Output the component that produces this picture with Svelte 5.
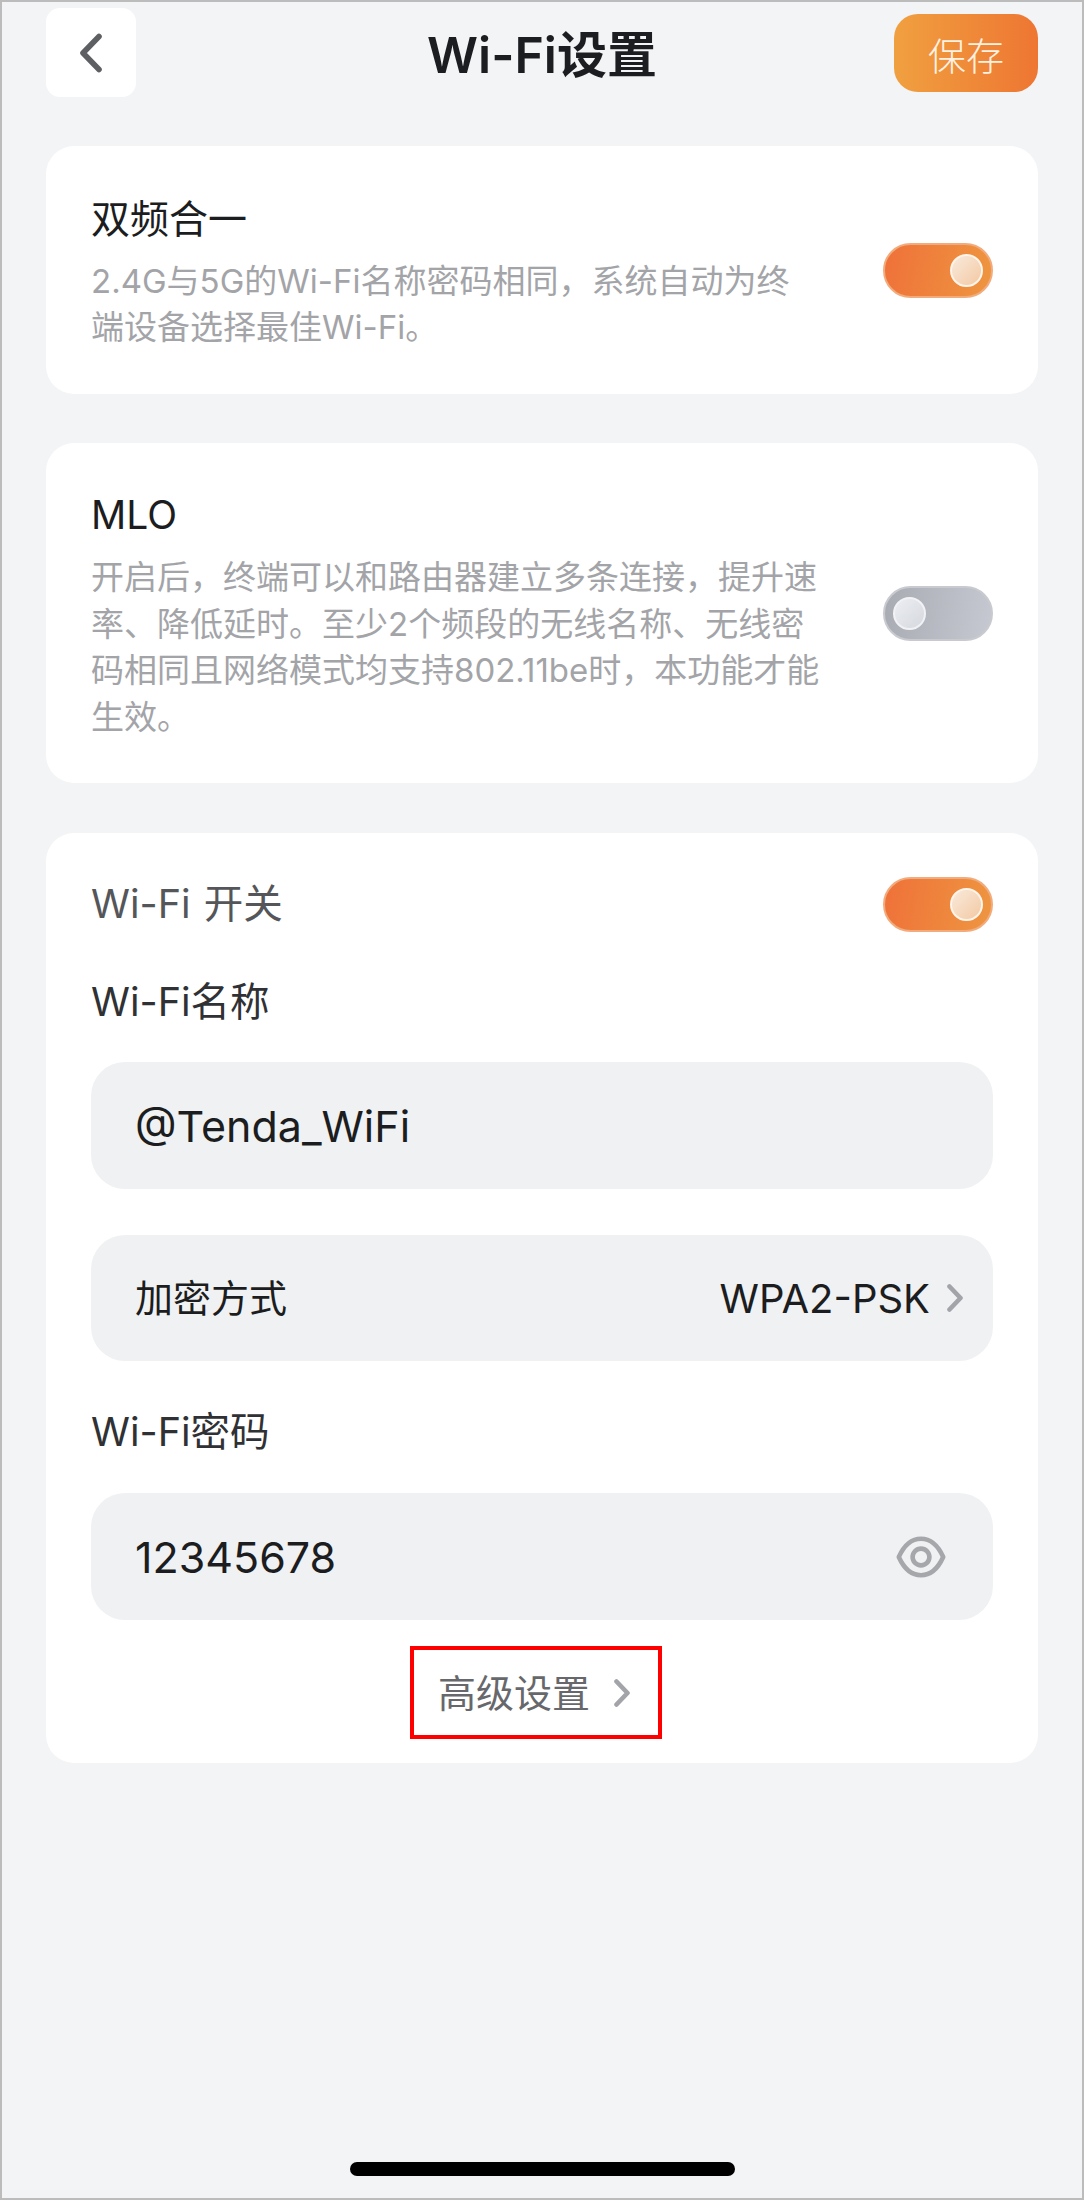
<script>
  let dualBand = $state(true);
  let mlo = $state(false);
  let wifiOn = $state(true);
</script>

{#snippet chevron()}
  <svg class="chevron" viewBox="0 0 16 28" width="16" height="28" aria-hidden="true">
    <path d="M2.5 2.5 13.5 14 2.5 25.5" fill="none" stroke="#a3a4a9" stroke-width="4.6" stroke-linecap="round" stroke-linejoin="round" />
  </svg>
{/snippet}

{#snippet toggle(on, flip)}
  <button class="toggle" class:on onclick={flip} aria-pressed={on} aria-label="toggle">
    <span class="knob"></span>
  </button>
{/snippet}

<div class="page">
  <header class="topbar">
    <button class="back" aria-label="back">
      <svg viewBox="0 0 24 40" width="24" height="40" aria-hidden="true">
        <path d="M20 3.5 4 20 20 36.5" fill="none" stroke="#5e5f62" stroke-width="5.6" stroke-linecap="round" stroke-linejoin="round" />
      </svg>
    </button>
    <h1>Wi-Fi设置</h1>
    <button class="save">保存</button>
  </header>

  <section class="card intro first">
    <div class="copy">
      <div class="title">双频合一</div>
      <p>2.4G与5G的Wi-Fi名称密码相同，系统自动为终端设备选择最佳Wi-Fi。</p>
    </div>
    {@render toggle(dualBand, () => (dualBand = !dualBand))}
  </section>

  <section class="card intro second">
    <div class="copy">
      <div class="title">MLO</div>
      <p>开启后，终端可以和路由器建立多条连接，提升速率、降低延时。至少2个频段的无线名称、无线密码相同且网络模式均支持802.11be时，本功能才能生效。</p>
    </div>
    {@render toggle(mlo, () => (mlo = !mlo))}
  </section>

  <section class="card wifi">
    <div class="switch-row">
      <span>Wi-Fi 开关</span>
      {@render toggle(wifiOn, () => (wifiOn = !wifiOn))}
    </div>

    <div class="label name-label">Wi-Fi名称</div>
    <div class="field name-field">@Tenda_WiFi</div>

    <div class="field select">
      <span class="select-name">加密方式</span>
      <span class="value">WPA2-PSK {@render chevron()}</span>
    </div>

    <div class="label pwd-label">Wi-Fi密码</div>
    <div class="field pwd">
      <span>12345678</span>
      <svg viewBox="0 0 50 42" width="50" height="42" aria-hidden="true">
        <path d="M2.8 21C8 9.5 16 2.8 25 2.8S42 9.5 47.2 21C42 32.5 34 39.2 25 39.2S8 32.5 2.8 21Z" fill="none" stroke="#a6a7aa" stroke-width="4.6" stroke-linejoin="round" />
        <circle cx="25" cy="21" r="8.4" fill="none" stroke="#a6a7aa" stroke-width="4.6" />
      </svg>
    </div>

    <button class="advanced"><span>高级设置</span> {@render chevron()}</button>
  </section>

  <div class="home-bar"></div>
</div>

<style>
  :global(body) {
    margin: 0;
  }

  .page {
    box-sizing: border-box;
    display: flex;
    flex-direction: column;
    height: 2200px;
    padding: 6px 44px 0;
    border: 2px solid #bcbcbc;
    background: #f3f4f6;
    color: #1c1d20;
    font-family: Inter, "Noto Sans CJK SC", sans-serif;
  }

  button {
    border: 0;
    padding: 0;
    font: inherit;
    cursor: pointer;
  }

  .topbar {
    display: grid;
    grid-template-columns: 1fr auto 1fr;
    align-items: start;
    height: 89px;
  }

  .back {
    display: flex;
    align-items: center;
    justify-content: center;
    width: 90px;
    height: 89px;
    border-radius: 14px;
    background: #fff;
  }

  h1 {
    margin: 15px 0 0;
    font-size: 50px;
    font-weight: 600;
    line-height: 64px;
  }

  .save {
    justify-self: end;
    width: 144px;
    height: 78px;
    margin-top: 6px;
    border-radius: 24px;
    background: linear-gradient(90deg, #f0a040, #ee7632);
    color: #fff2e2;
    font-size: 38px;
    font-weight: 300;
  }

  .card {
    border-radius: 28px;
    background: #fff;
  }

  .intro {
    display: flex;
    align-items: center;
    justify-content: space-between;
    box-sizing: border-box;
    padding: 0 45px;
  }

  .first {
    height: 248px;
    margin-top: 49px;
  }

  .second {
    height: 340px;
    margin-top: 49px;
  }

  .copy {
    width: 729px;
    padding-top: 6px;
  }

  .title {
    font-size: 39px;
    line-height: 46px;
  }

  .copy p {
    margin: 16px 0 0;
    color: #a3a4a8;
    font-size: 33px;
    line-height: 46.5px;
  }

  .toggle {
    position: relative;
    flex: none;
    box-sizing: border-box;
    width: 110px;
    height: 55px;
    border: 2px solid #c8cad0;
    border-radius: 28px;
    background: linear-gradient(100deg, #a8abb2, #c6c9d1);
  }

  .toggle.on {
    border-color: #f2ab7c;
    background: linear-gradient(100deg, #ef7139, #ee9640);
  }

  .knob {
    position: absolute;
    top: 9px;
    left: 8px;
    box-sizing: border-box;
    width: 33px;
    height: 33px;
    border: 2px solid #f1f2f5;
    border-radius: 50%;
    background: linear-gradient(135deg, #eceef2, #d5d8de);
  }

  .toggle.on .knob {
    left: auto;
    right: 8px;
    border-color: #fdf4ea;
    background: linear-gradient(135deg, #f9eadc, #f3c9a3);
  }

  .wifi {
    box-sizing: border-box;
    height: 930px;
    margin-top: 50px;
    padding: 43px 45px 0;
  }

  .switch-row {
    display: flex;
    align-items: center;
    justify-content: space-between;
    color: #55565a;
    font-size: 39.5px;
    line-height: 56px;
    word-spacing: 2px;
  }

  .label {
    color: #303134;
    font-size: 39.5px;
    line-height: 46px;
  }

  .name-label {
    margin-top: 47px;
  }

  .pwd-label {
    margin-top: 48px;
  }

  .field {
    display: flex;
    align-items: center;
    justify-content: space-between;
    box-sizing: border-box;
    height: 127px;
    padding: 0 47px 0 44px;
    border-radius: 34px;
    background: #f0f1f3;
    font-size: 43px;
  }

  .name-field {
    margin-top: 37px;
  }

  .select {
    height: 126px;
    margin-top: 46px;
    padding-right: 30px;
    font-size: 40px;
  }

  .select-name {
    margin-bottom: 5px;
    font-size: 38px;
  }

  .value {
    display: flex;
    align-items: center;
    gap: 17px;
  }

  .pwd {
    margin-top: 38px;
  }

  .advanced {
    display: flex;
    align-items: center;
    gap: 24px;
    box-sizing: border-box;
    width: 252px;
    height: 93px;
    margin: 26px 0 0 319px;
    padding-left: 24px;
    border: 4px solid #f00;
    background: #fff;
    color: #67686b;
    font-size: 38px;
  }

  .advanced span {
    margin-bottom: 4px;
  }

  .home-bar {
    align-self: center;
    width: 385px;
    height: 14px;
    margin-top: auto;
    margin-bottom: 22px;
    border-radius: 7px;
    background: #000;
  }
</style>
